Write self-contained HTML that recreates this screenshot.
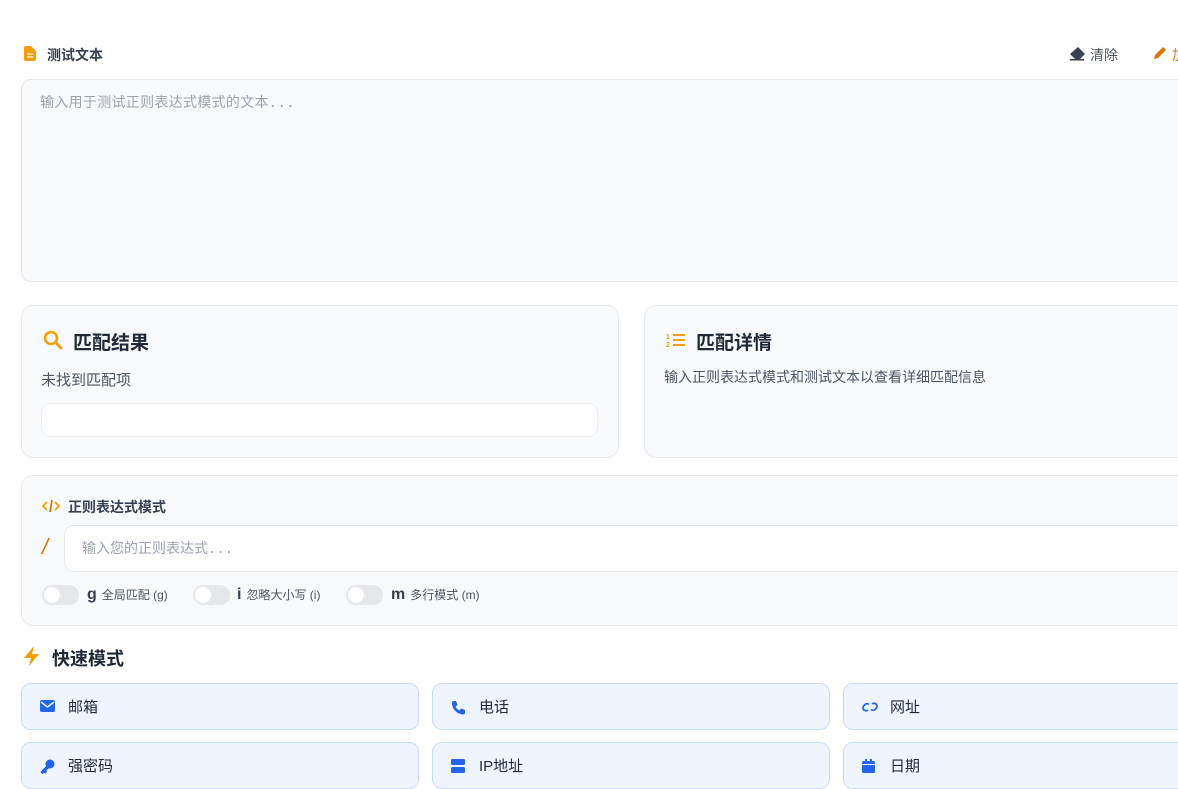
<!DOCTYPE html>
<html><head><meta charset="utf-8"><style>
*{box-sizing:border-box;margin:0;padding:0}
body{width:1178px;height:785px;overflow:hidden;background:#fff;font-family:"Liberation Sans","Noto Sans CJK SC",sans-serif;color:#1f2937;position:relative}
.abs{position:absolute}
.lbl{font-size:14px;font-weight:bold;color:#374151}
.ta{left:21px;top:79px;width:1180px;height:203px;border:1px solid #e5e7eb;border-radius:10px;background:#f8f9fb}
.ta span{position:absolute;left:18px;top:12px;font-size:14px;color:#9ca3af;font-family:"Liberation Mono","Noto Sans CJK SC",monospace;letter-spacing:0.3px}
.card{border:1px solid #e9ebef;border-radius:12px;background:#f8f9fb}
.h{font-size:19px;font-weight:bold;color:#1f2937}
.tog{width:37px;height:20px;border-radius:10px;background:#e5e7eb;position:absolute}
.tog:after{content:"";position:absolute;left:2px;top:2px;width:16px;height:16px;border-radius:50%;background:#fff}
.fl{position:absolute;font-size:12px;color:#4b5563;top:586px}
.fl b{font-size:16px;color:#374151;margin-right:5px}
.q{position:absolute;width:398px;height:47px;border:1px solid #c7dcfb;border-radius:10px;background:#eef5ff;font-size:15px;color:#1f2937}
.q svg{position:absolute;left:18px;top:16px}
.q span{position:absolute;left:46px;top:12px}
</style></head><body>
<svg class="abs" style="left:24px;top:46px" width="12" height="15" viewBox="0 0 12 15"><path d="M2 0h5l5 5v8a2 2 0 0 1-2 2H2a2 2 0 0 1-2-2V2a2 2 0 0 1 2-2z" fill="#f59e0b"/><path d="M3 8h6M3 11h6" stroke="#fff" stroke-width="1.3"/></svg>
<div class="abs lbl" style="left:47px;top:45px">测试文本</div>
<svg class="abs" style="left:1069px;top:47px" width="16" height="14" viewBox="0 0 16 14"><path d="M9 0l7 7-5 5H6L1 7z" fill="#374151"/><rect x="1" y="12" width="14" height="1.5" fill="#374151"/></svg>
<div class="abs" style="left:1090px;top:45px;font-size:14px;color:#4b5563">清除</div>
<svg class="abs" style="left:1153px;top:46px" width="14" height="14" viewBox="0 0 14 14"><path d="M10 1l3 3-8 8-4 1 1-4z" fill="#d97706"/></svg>
<div class="abs" style="left:1172px;top:45px;font-size:14px;color:#d97706">加</div>
<div class="abs ta"><span>输入用于测试正则表达式模式的文本...</span></div>

<div class="abs card" style="left:21px;top:305px;width:598px;height:153px"></div>
<svg class="abs" style="left:43px;top:330px" width="20" height="20" viewBox="0 0 20 20"><circle cx="8" cy="8" r="6" fill="none" stroke="#f59e0b" stroke-width="2.6"/><path d="M12.5 12.5L18 18" stroke="#f59e0b" stroke-width="2.8" stroke-linecap="round"/></svg>
<div class="abs h" style="left:73px;top:328px">匹配结果</div>
<div class="abs" style="left:41px;top:369px;font-size:15px;color:#4b5563">未找到匹配项</div>
<div class="abs" style="left:41px;top:403px;width:557px;height:34px;background:#fff;border:1px solid #eceef2;border-radius:10px"></div>

<div class="abs card" style="left:644px;top:305px;width:560px;height:153px"></div>
<svg class="abs" style="left:666px;top:332px" width="20" height="16" viewBox="0 0 20 16"><text x="0" y="7" font-size="7" font-weight="bold" fill="#f59e0b" font-family="Liberation Sans">1</text><text x="0" y="15" font-size="7" font-weight="bold" fill="#f59e0b" font-family="Liberation Sans">2</text><rect x="7" y="2" width="12" height="2" fill="#f59e0b"/><rect x="7" y="7" width="12" height="2" fill="#f59e0b"/><rect x="7" y="12" width="12" height="2" fill="#f59e0b"/></svg>
<div class="abs h" style="left:696px;top:328px">匹配详情</div>
<div class="abs" style="left:664px;top:367px;font-size:14px;color:#4b5563">输入正则表达式模式和测试文本以查看详细匹配信息</div>

<div class="abs card" style="left:21px;top:475px;width:1180px;height:151px"></div>
<svg class="abs" style="left:42px;top:499px" width="18" height="14" viewBox="0 0 18 14"><path d="M5 3L1 7l4 4M13 3l4 4-4 4" fill="none" stroke="#f59e0b" stroke-width="1.8"/><path d="M10 1L8 13" stroke="#d97706" stroke-width="1.8"/></svg>
<div class="abs lbl" style="left:68px;top:497px">正则表达式模式</div>
<div class="abs" style="left:42px;top:534px;font-size:22px;color:#d97706;font-style:italic">/</div>
<div class="abs" style="left:64px;top:525px;width:1140px;height:47px;background:#fff;border:1px solid #e5e7eb;border-radius:10px"></div>
<div class="abs" style="left:82px;top:538px;font-size:14px;color:#9ca3af;font-family:'Liberation Mono','Noto Sans CJK SC',monospace">输入您的正则表达式...</div>
<div class="tog" style="left:42px;top:585px"></div><div class="fl" style="left:87px"><b>g</b>全局匹配 (g)</div>
<div class="tog" style="left:193px;top:585px"></div><div class="fl" style="left:237px"><b>i</b>忽略大小写 (i)</div>
<div class="tog" style="left:346px;top:585px"></div><div class="fl" style="left:391px"><b>m</b>多行模式 (m)</div>

<svg class="abs" style="left:23px;top:646px" width="18" height="20" viewBox="0 0 18 20"><path d="M11 0L1 12h7l-2 8 10-12H9z" fill="#f59e0b"/></svg>
<div class="abs h" style="left:52px;top:645px;font-size:18px">快速模式</div>

<div class="q" style="left:21px;top:683px"><svg width="15" height="12" viewBox="0 0 15 12"><rect width="15" height="12" rx="2" fill="#2563eb"/><path d="M1 2l6.5 5L14 2" fill="none" stroke="#eef5ff" stroke-width="1.5"/></svg><span>邮箱</span></div>
<div class="q" style="left:432px;top:683px"><svg width="15" height="15" viewBox="0 0 15 15"><path d="M2 1l3 0 1.5 4-2 1.5c1 2 2 3 4 4L10 8.5l4 1.5v3c0 1-1 1.5-2 1.5C6 14 1 9 1 3c0-1 .5-2 1-2z" fill="#2563eb"/></svg><span>电话</span></div>
<div class="q" style="left:843px;top:683px"><svg width="16" height="14" viewBox="0 0 16 14"><path d="M7 4.5a3 3 0 0 0-4 0L2 5.5a3 3 0 0 0 4 4.5M9 9.5a3 3 0 0 0 4 0l1-1a3 3 0 0 0-4-4.5" fill="none" stroke="#2563eb" stroke-width="1.8"/></svg><span>网址</span></div>
<div class="q" style="left:21px;top:742px"><svg width="15" height="15" viewBox="0 0 15 15"><circle cx="10" cy="5" r="4.5" fill="#2563eb"/><path d="M7 7L1 13l1.5 1.5L4 13l1 1 1.5-1.5-1-1L8.5 9" fill="#2563eb" stroke="#2563eb" stroke-width="1"/></svg><span>强密码</span></div>
<div class="q" style="left:432px;top:742px"><svg width="14" height="14" viewBox="0 0 14 14"><rect width="14" height="6" rx="1.5" fill="#2563eb"/><rect y="8" width="14" height="6" rx="1.5" fill="#2563eb"/></svg><span>IP地址</span></div>
<div class="q" style="left:843px;top:742px"><svg width="13" height="14" viewBox="0 0 13 14"><rect y="2" width="13" height="12" rx="1.5" fill="#2563eb"/><rect x="3" width="2" height="3" fill="#2563eb"/><rect x="8" width="2" height="3" fill="#2563eb"/><rect x="0" y="5" width="13" height="1" fill="#eef5ff"/></svg><span>日期</span></div>
</body></html>
